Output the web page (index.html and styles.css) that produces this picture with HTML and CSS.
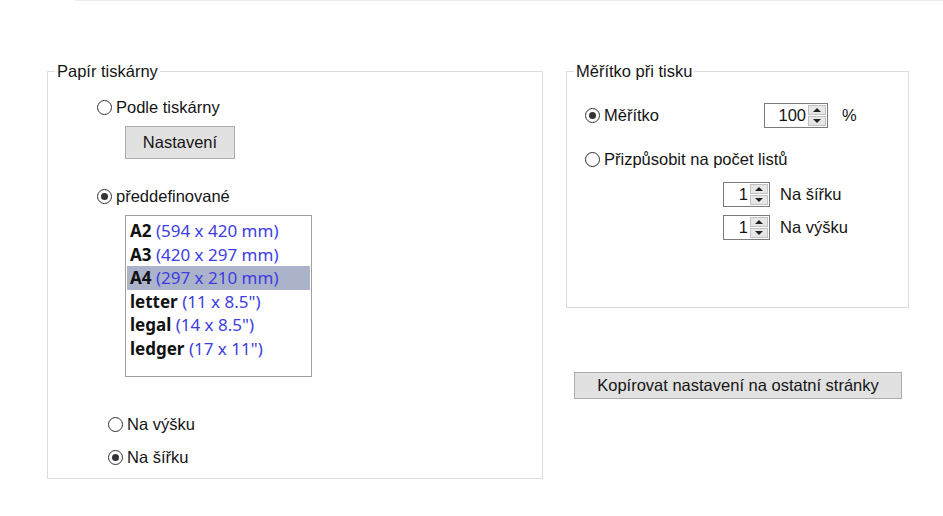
FILE: index.html
```html
<!DOCTYPE html>
<html lang="cs">
<head>
<meta charset="utf-8">
<title>Tisk</title>
<link rel="stylesheet" href="styles.css">
</head>
<body>
<div class="topline"></div>
<div class="page">
  <section class="group group-paper">
    <div class="group-title">Papír tiskárny</div>
    <label class="radio row1"><span class="dot"></span><span>Podle tiskárny</span></label>
    <button class="btn btn-setup">Nastavení</button>
    <label class="radio checked row2"><span class="dot"></span><span>předdefinované</span></label>
    <ul class="list">
      <li><b>A2</b> <span class="dim">(594 x 420 mm)</span></li>
      <li><b>A3</b> <span class="dim">(420 x 297 mm)</span></li>
      <li class="sel"><b>A4</b> <span class="dim">(297 x 210 mm)</span></li>
      <li><b>letter</b> <span class="dim">(11 x 8.5")</span></li>
      <li><b>legal</b> <span class="dim">(14 x 8.5")</span></li>
      <li><b>ledger</b> <span class="dim">(17 x 11")</span></li>
    </ul>
    <label class="radio orient1"><span class="dot"></span><span>Na výšku</span></label>
    <label class="radio checked orient2"><span class="dot"></span><span>Na šířku</span></label>
  </section>
  <div class="col-right">
    <section class="group group-scale">
      <div class="group-title">Měřítko při tisku</div>
      <div class="scale-row">
        <label class="radio checked scale-radio"><span class="dot"></span><span>Měřítko</span></label>
        <div class="spin spin-wide">
          <span class="spin-val">100</span>
          <span class="spin-btns"><span class="up"></span><span class="down"></span></span>
        </div>
        <span class="pct">%</span>
      </div>
      <label class="radio fit-row"><span class="dot"></span><span>Přizpůsobit na počet listů</span></label>
      <div class="spin-row first">
        <div class="spin spin-narrow">
          <span class="spin-val">1</span>
          <span class="spin-btns"><span class="up"></span><span class="down"></span></span>
        </div>
        <span>Na šířku</span>
      </div>
      <div class="spin-row second">
        <div class="spin spin-narrow">
          <span class="spin-val">1</span>
          <span class="spin-btns"><span class="up"></span><span class="down"></span></span>
        </div>
        <span>Na výšku</span>
      </div>
    </section>
    <button class="btn btn-copy">Kopírovat nastavení na ostatní stránky</button>
  </div>
</div>
</body>
</html>
```

FILE: styles.css
```css
body {
  margin: 0;
  background: #fff;
  font-family: "Liberation Sans", Arial, sans-serif;
  font-size: 16.5px;
  color: #151515;
}

.topline {
  height: 1px;
  margin-left: 75px;
  background: #ebebeb;
}

.page {
  display: flex;
  align-items: flex-start;
  gap: 23px;
  padding: 70px 0 0 47px;
}

.col-right {
  display: flex;
  flex-direction: column;
  align-items: flex-start;
}

.group {
  position: relative;
  box-sizing: border-box;
  border: 1px solid #dcdcdc;
  display: flex;
  flex-direction: column;
  align-items: flex-start;
}

.group-paper {
  width: 496px;
  height: 408px;
}

.group-scale {
  width: 343px;
  height: 237px;
}

.group-title {
  position: absolute;
  top: -10px;
  left: 7px;
  padding: 0 2px;
  background: #fff;
  line-height: 19px;
  white-space: nowrap;
}

.radio {
  display: flex;
  align-items: center;
  gap: 4px;
  height: 20px;
  white-space: nowrap;
}

.dot {
  position: relative;
  flex: none;
  width: 15px;
  height: 15px;
  box-sizing: border-box;
  border: 1px solid #333;
  border-radius: 50%;
  background: #fff;
}

.checked .dot::after {
  content: "";
  position: absolute;
  inset: 3px;
  border-radius: 50%;
  background: #333;
}

.btn {
  font: inherit;
  color: #151515;
  background: #e1e1e1;
  border: 1px solid #adadad;
  padding: 0;
  box-sizing: border-box;
}

.row1 {
  margin: 25px 0 0 49px;
}

.btn-setup {
  margin: 9px 0 0 77px;
  width: 110px;
  height: 33px;
}

.row2 {
  margin: 27px 0 0 49px;
}

.list {
  margin: 9px 0 0 77px;
  padding: 3px 1px;
  list-style: none;
  width: 187px;
  height: 162px;
  box-sizing: border-box;
  border: 1px solid #a0a0a0;
  font-family: "Noto Sans", "Open Sans", sans-serif;
  font-size: 17px;
  line-height: 23.6px;
  color: #111;
}

.list li {
  padding-left: 3px;
  white-space: nowrap;
}

.list li.sel {
  background: #abb3cb;
}

.dim {
  color: #3d3de0;
}

.orient1 {
  margin: 37px 0 0 60px;
}

.orient2 {
  margin: 13px 0 0 60px;
}

.scale-row {
  display: flex;
  align-items: center;
  height: 25px;
  margin: 31px 0 0 18px;
}

.scale-radio {
  width: 179px;
}

.pct {
  margin-left: 14px;
}

.fit-row {
  margin: 21px 0 0 18px;
}

.spin-row {
  display: flex;
  align-items: center;
  gap: 10px;
  margin-left: 156px;
}

.spin-row.first {
  margin-top: 13px;
}

.spin-row.second {
  margin-top: 8px;
}

.spin {
  display: flex;
  box-sizing: border-box;
  height: 25px;
  border: 1px solid #7a7a7a;
  background: #fff;
}

.spin-wide {
  width: 64px;
}

.spin-narrow {
  width: 47px;
}

.spin-val {
  flex: 1;
  text-align: right;
  line-height: 23px;
  padding-right: 1px;
}

.spin-btns {
  display: flex;
  flex-direction: column;
  width: 20px;
  padding: 1px;
  gap: 1px;
  box-sizing: border-box;
}

.spin-btns span {
  flex: 1;
  display: flex;
  align-items: center;
  justify-content: center;
  background: #e6e6e6;
  border: 1px solid #c2c2c2;
}

.up::before,
.down::before {
  content: "";
  width: 0;
  height: 0;
  border-left: 4px solid transparent;
  border-right: 4px solid transparent;
}

.up::before {
  border-bottom: 4px solid #222;
}

.down::before {
  border-top: 4px solid #222;
}

.btn-copy {
  margin: 64px 0 0 8px;
  width: 328px;
  height: 27px;
}
```
